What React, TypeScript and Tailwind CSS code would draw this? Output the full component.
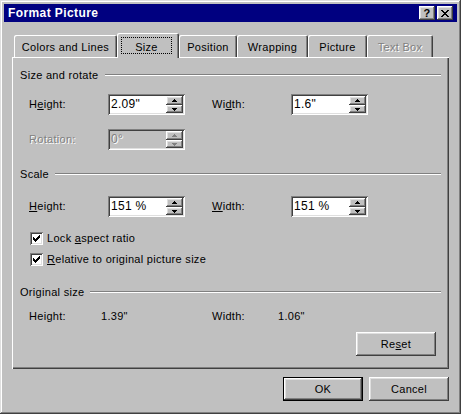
import React from "react";

const raised =
  "shadow-[inset_-1px_-1px_0_#404040,inset_1px_1px_0_#fff,inset_-2px_-2px_0_#808080,inset_2px_2px_0_#dfdfdf]";
const sunken =
  "shadow-[inset_1px_1px_0_#808080,inset_-1px_-1px_0_#fff,inset_2px_2px_0_#404040,inset_-2px_-2px_0_#dfdfdf]";
const emboss = "text-[#808080] [text-shadow:1px_1px_0_#fff]";

function Arrow({ up, disabled }: { up?: boolean; disabled?: boolean }) {
  return (
    <svg width="5" height="3" viewBox="0 0 5 3" className={disabled ? "fill-[#808080]" : "fill-black"}>
      {up ? <path d="M2 0h1v1H2zM1 1h3v1H1zM0 2h5v1H0z" /> : <path d="M0 0h5v1H0zM1 1h3v1H1zM2 2h1v1H2z" />}
    </svg>
  );
}

function Spin({ value, disabled }: { value: string; disabled?: boolean }) {
  return (
    <div className={`flex h-[21px] w-[77px] p-[2px] ${sunken} ${disabled ? "bg-[#c0c0c0]" : "bg-white"}`}>
      <div className={`flex-1 pl-[1px] text-[12px] leading-[17px] ${disabled ? emboss : "text-black"}`}>{value}</div>
      <div className="flex w-[17px] flex-col">
        <div className={`flex h-[9px] items-center justify-center bg-[#c0c0c0] ${raised}`}>
          <Arrow up disabled={disabled} />
        </div>
        <div className={`flex h-[8px] items-center justify-center bg-[#c0c0c0] ${raised}`}>
          <Arrow disabled={disabled} />
        </div>
      </div>
    </div>
  );
}

function Group({ title }: { title: string }) {
  return (
    <div className="flex h-[14px] items-center gap-[6px]">
      <span className="leading-[14px]">{title}</span>
      <div className="h-[2px] flex-1 border-t border-b border-t-[#808080] border-b-white" />
    </div>
  );
}

function Check({ children }: { children: React.ReactNode }) {
  return (
    <div className="flex h-[14px] items-center gap-[4px] pl-[10px]">
      <div className={`flex h-[13px] w-[13px] items-center justify-center bg-white ${sunken}`}>
        <svg width="7" height="7" viewBox="0 0 7 7" className="fill-black">
          <path d="M6 0h1v1H6zM5 1h2v1H5zM0 2h1v1H0zM4 2h3v1H4zM0 3h2v1H0zM3 3h3v1H3zM0 4h5v1H0zM1 5h3v1H1zM2 6h1v1H2z" />
        </svg>
      </div>
      <span className="leading-[14px]">{children}</span>
    </div>
  );
}

function Tab({ label, w, disabled }: { label: string; w: string; disabled?: boolean }) {
  return (
    <div
      className={`${w} h-[22px] rounded-t-[2px] pt-[6px] text-center leading-[13px] shadow-[inset_1px_1px_0_#fff,inset_-1px_0_0_#404040,inset_-2px_0_0_#808080] ${
        disabled ? emboss : ""
      }`}
    >
      {label}
    </div>
  );
}

function Button({ children, primary }: { children: React.ReactNode; primary?: boolean }) {
  return (
    <div className={`h-[24px] w-[80px] ${primary ? "border border-black" : ""}`}>
      <div className={`flex h-full w-full items-center justify-center leading-[13px] ${raised}`}>{children}</div>
    </div>
  );
}

export default function App() {
  return (
    <div
      className={`flex h-[414px] w-[461px] flex-col bg-[#c0c0c0] p-[4px] font-['Liberation_Sans',Arial,sans-serif] text-[11px] tracking-[0.3px] text-black shadow-[inset_-1px_-1px_0_#404040,inset_1px_1px_0_#dfdfdf,inset_-2px_-2px_0_#808080,inset_2px_2px_0_#fff]`}
    >
      {/* Title bar */}
      <div className="flex h-[18px] items-center bg-[#000080] pl-[4px] pr-[4px]">
        <span className="flex-1 text-[12px] font-bold tracking-[0.4px] text-white">Format Picture</span>
        <div className="flex gap-[2px]">
          <div className={`flex h-[14px] w-[16px] items-center justify-center bg-[#c0c0c0] text-[11px] font-bold leading-none ${raised}`}>
            ?
          </div>
          <div className={`flex h-[14px] w-[16px] items-center justify-center bg-[#c0c0c0] ${raised}`}>
            <svg width="8" height="7" viewBox="0 0 8 7" className="fill-black">
              <path d="M0 0h2v1H0zM6 0h2v1H6zM1 1h2v1H1zM5 1h2v1H5zM2 2h4v1H2zM3 3h2v1H3zM2 4h4v1H2zM1 5h2v1H1zM5 5h2v1H5zM0 6h2v1H0zM6 6h2v1H6z" />
            </svg>
          </div>
        </div>
      </div>

      <div className="flex flex-1 flex-col px-[8px] pt-[11px]">
        {/* Tabs */}
        <div className="flex h-[24px] items-end pl-[2px]">
          <Tab label="Colors and Lines" w="w-[103px]" />
          <div className="relative z-10 mb-[-1px] h-[25px] w-[62px] self-end rounded-t-[2px] bg-[#c0c0c0] pl-[4px] pt-[4px] shadow-[inset_1px_1px_0_#fff,inset_-1px_0_0_#404040,inset_-2px_0_0_#808080]">
            <div className="h-[17px] w-[51px] border border-dotted border-black pt-[3px] text-center leading-[13px]">Size</div>
          </div>
          <Tab label="Position" w="w-[58px]" />
          <Tab label="Wrapping" w="w-[71px]" />
          <Tab label="Picture" w="w-[59px]" />
          <Tab label="Text Box" w="w-[66px]" disabled />
        </div>

        {/* Panel */}
        <div className="flex h-[312px] flex-col px-[8px] pt-[11px] shadow-[inset_1px_1px_0_#fff,inset_-1px_-1px_0_#404040,inset_-2px_-2px_0_#808080]">
          <Group title="Size and rotate" />
          <div className="mt-[12px] flex h-[21px] items-center pl-[9px]">
            <span className="w-[79px]">
              H<span className="underline">e</span>ight:
            </span>
            <Spin value={'2.09"'} />
            <span className="ml-[27px] w-[79px]">
              Wi<span className="underline">d</span>th:
            </span>
            <Spin value={'1.6"'} />
          </div>
          <div className="mt-[14px] flex h-[21px] items-center pl-[9px]">
            <span className={`w-[79px] ${emboss}`}>Rotation:</span>
            <Spin value="0°" disabled />
          </div>

          <div className="mt-[17px]">
            <Group title="Scale" />
          </div>
          <div className="mt-[15px] flex h-[21px] items-center pl-[9px]">
            <span className="w-[79px]">
              <span className="underline">H</span>eight:
            </span>
            <Spin value="151 %" />
            <span className="ml-[27px] w-[79px]">
              <span className="underline">W</span>idth:
            </span>
            <Spin value="151 %" />
          </div>
          <div className="mt-[14px]">
            <Check>
              Lock <span className="underline">a</span>spect ratio
            </Check>
          </div>
          <div className="mt-[7px]">
            <Check>
              <span className="underline">R</span>elative to original picture size
            </Check>
          </div>

          <div className="mt-[19px]">
            <Group title="Original size" />
          </div>
          <div className="mt-[10px] flex h-[14px] items-center pl-[9px] leading-[14px]">
            <span className="w-[72px]">Height:</span>
            <span className="w-[111px]">1.39"</span>
            <span className="w-[66px]">Width:</span>
            <span>1.06"</span>
          </div>
          <div className="mr-[5px] mt-[9px] self-end">
            <Button>
              Re<span className="underline">s</span>et
            </Button>
          </div>
        </div>

        {/* Footer */}
        <div className="mt-[8px] flex justify-end gap-[6px]">
          <Button primary>OK</Button>
          <Button>Cancel</Button>
        </div>
      </div>
    </div>
  );
}
